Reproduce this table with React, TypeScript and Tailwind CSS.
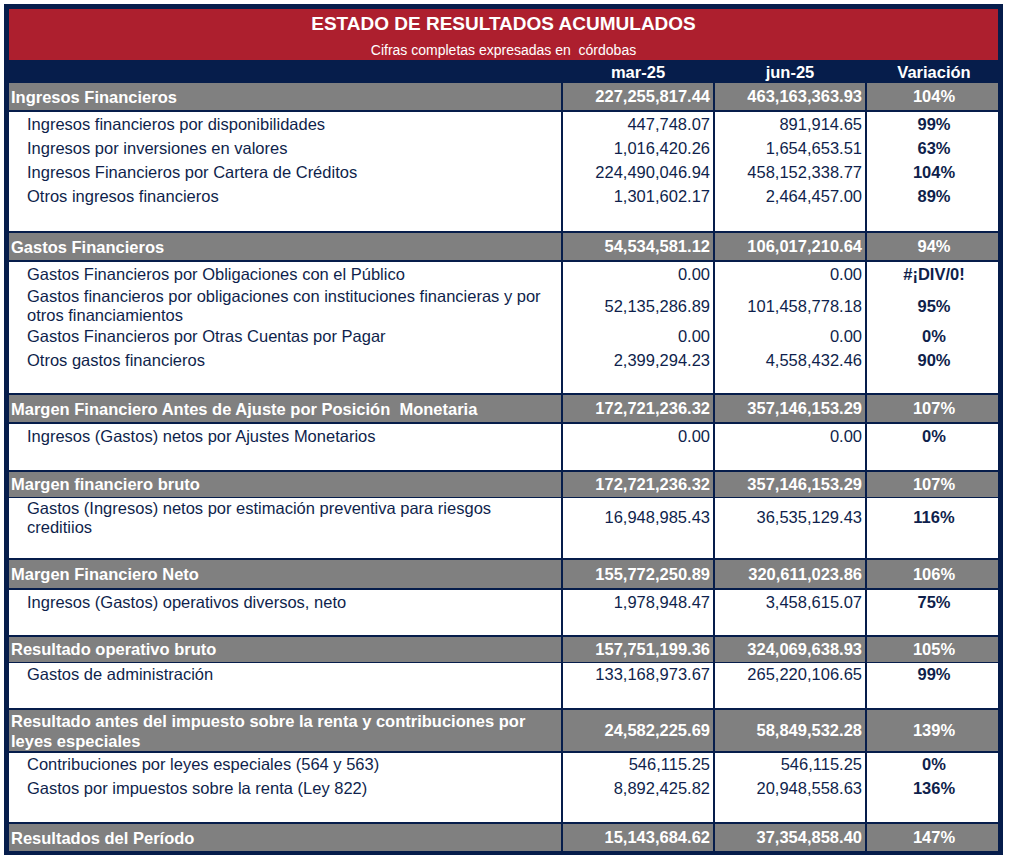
import React from "react";

type Row = { label: string[]; a: string; b: string; v: string; h: string };
type Section = {
  head: { label: string[]; a: string; b: string; v: string; h: string };
  rows: Row[];
  bodyH: string;
};

const sections: Section[] = [
  {
    head: { label: ["Ingresos Financieros"], a: "227,255,817.44", b: "463,163,363.93", v: "104%", h: "h-[27px]" },
    bodyH: "h-[119px]",
    rows: [
      { label: ["Ingresos financieros por disponibilidades"], a: "447,748.07", b: "891,914.65", v: "99%", h: "h-[24px]" },
      { label: ["Ingresos por inversiones en valores"], a: "1,016,420.26", b: "1,654,653.51", v: "63%", h: "h-[24px]" },
      { label: ["Ingresos Financieros por Cartera de Créditos"], a: "224,490,046.94", b: "458,152,338.77", v: "104%", h: "h-[24px]" },
      { label: ["Otros ingresos financieros"], a: "1,301,602.17", b: "2,464,457.00", v: "89%", h: "h-[24px]" },
    ],
  },
  {
    head: { label: ["Gastos Financieros"], a: "54,534,581.12", b: "106,017,210.64", v: "94%", h: "h-[27px]" },
    bodyH: "h-[131px]",
    rows: [
      { label: ["Gastos Financieros por Obligaciones con el Público"], a: "0.00", b: "0.00", v: "#¡DIV/0!", h: "h-[25px]" },
      {
        label: ["Gastos financieros por obligaciones con instituciones financieras y por", "otros financiamientos"],
        a: "52,135,286.89",
        b: "101,458,778.18",
        v: "95%",
        h: "h-[38px]",
      },
      { label: ["Gastos Financieros por Otras Cuentas por Pagar"], a: "0.00", b: "0.00", v: "0%", h: "h-[23px]" },
      { label: ["Otros gastos financieros"], a: "2,399,294.23", b: "4,558,432.46", v: "90%", h: "h-[24px]" },
    ],
  },
  {
    head: {
      label: ["Margen Financiero Antes de Ajuste por Posición  Monetaria"],
      a: "172,721,236.32",
      b: "357,146,153.29",
      v: "107%",
      h: "h-[27px]",
    },
    bodyH: "h-[46px]",
    rows: [
      { label: ["Ingresos (Gastos) netos por Ajustes Monetarios"], a: "0.00", b: "0.00", v: "0%", h: "h-[24px]" },
    ],
  },
  {
    head: { label: ["Margen financiero bruto"], a: "172,721,236.32", b: "357,146,153.29", v: "107%", h: "h-[24px]" },
    bodyH: "h-[60px]",
    rows: [
      {
        label: ["Gastos (Ingresos) netos por estimación preventiva para riesgos", "creditiios"],
        a: "16,948,985.43",
        b: "36,535,129.43",
        v: "116%",
        h: "h-[39px]",
      },
    ],
  },
  {
    head: { label: ["Margen Financiero Neto"], a: "155,772,250.89", b: "320,611,023.86", v: "106%", h: "h-[28px]" },
    bodyH: "h-[45px]",
    rows: [
      { label: ["Ingresos (Gastos) operativos diversos, neto"], a: "1,978,948.47", b: "3,458,615.07", v: "75%", h: "h-[24px]" },
    ],
  },
  {
    head: { label: ["Resultado operativo bruto"], a: "157,751,199.36", b: "324,069,638.93", v: "105%", h: "h-[24px]" },
    bodyH: "h-[45px]",
    rows: [
      { label: ["Gastos de administración"], a: "133,168,973.67", b: "265,220,106.65", v: "99%", h: "h-[23px]" },
    ],
  },
  {
    head: {
      label: ["Resultado antes del impuesto sobre la renta y contribuciones por", "leyes especiales"],
      a: "24,582,225.69",
      b: "58,849,532.28",
      v: "139%",
      h: "h-[41px]",
    },
    bodyH: "h-[69px]",
    rows: [
      { label: ["Contribuciones por leyes especiales (564 y 563)"], a: "546,115.25", b: "546,115.25", v: "0%", h: "h-[23px]" },
      { label: ["Gastos por impuestos sobre la renta (Ley 822)"], a: "8,892,425.82", b: "20,948,558.63", v: "136%", h: "h-[24px]" },
    ],
  },
];

const finalRow = { label: ["Resultados del Período"], a: "15,143,684.62", b: "37,354,858.40", v: "147%", h: "h-[27px]" };

const GRID = "grid grid-cols-[552px_150px_150px_131px] gap-x-[2px]";

function HeadRow({ r }: { r: Section["head"] }) {
  return (
    <div className={`${GRID} ${r.h}`}>
      <div className="bg-[#808080] flex flex-col justify-center pl-[2px] text-white font-bold leading-[20px] whitespace-pre">
        {r.label.map((l, i) => (
          <span key={i}>{l}</span>
        ))}
      </div>
      <div className="bg-[#808080] flex items-center justify-end pr-[3px] text-white font-bold">{r.a}</div>
      <div className="bg-[#808080] flex items-center justify-end pr-[3px] text-white font-bold">{r.b}</div>
      <div className="bg-[#808080] flex items-center justify-center pl-[3px] text-white font-bold">{r.v}</div>
    </div>
  );
}

function Body({ s }: { s: Section }) {
  return (
    <div className={`${GRID} ${s.bodyH}`}>
      <div className="bg-white flex flex-col pl-[18px] text-[#0f1f4c]">
        {s.rows.map((r, i) => (
          <div key={i} className={`${r.h} flex flex-col justify-center leading-[19px]`}>
            {r.label.map((l, j) => (
              <span key={j}>{l}</span>
            ))}
          </div>
        ))}
      </div>
      <div className="bg-white flex flex-col pr-[3px] text-[#0f1f4c]">
        {s.rows.map((r, i) => (
          <div key={i} className={`${r.h} flex items-center justify-end`}>
            {r.a}
          </div>
        ))}
      </div>
      <div className="bg-white flex flex-col pr-[3px] text-[#0f1f4c]">
        {s.rows.map((r, i) => (
          <div key={i} className={`${r.h} flex items-center justify-end`}>
            {r.b}
          </div>
        ))}
      </div>
      <div className="bg-white flex flex-col pl-[3px] text-[#0f1f4c] font-bold">
        {s.rows.map((r, i) => (
          <div key={i} className={`${r.h} flex items-center justify-center`}>
            {r.v}
          </div>
        ))}
      </div>
    </div>
  );
}

export default function App() {
  return (
    <div className="w-[1009px] h-[862px] bg-white pt-[4px] pl-[4px] font-['Liberation_Sans',Arial,sans-serif] text-[16.5px]">
      <div className="w-[999px] border-t-[5px] border-l-[5px] border-r-[5px] border-b-[4px] border-[#061d4b] bg-[#061d4b] flex flex-col">
        <div className="h-[51px] bg-[#ad1f2e] flex flex-col items-center pt-[4px] text-white">
          <div className="h-[22px] leading-[22px] text-[19px] font-bold">ESTADO DE RESULTADOS ACUMULADOS</div>
          <div className="mt-[7px] h-[16px] leading-[16px] text-[14px] whitespace-pre">Cifras completas expresadas en  córdobas</div>
        </div>
        <div className={`${GRID} h-[23px] text-white font-bold`}>
          <div />
          <div className="flex items-center justify-center">mar-25</div>
          <div className="flex items-center justify-center">jun-25</div>
          <div className="flex items-center justify-center pl-[3px]">Variación</div>
        </div>
        <div className="flex flex-col gap-y-[2px]">
          {sections.map((s, i) => (
            <React.Fragment key={i}>
              <HeadRow r={s.head} />
              <Body s={s} />
            </React.Fragment>
          ))}
          <HeadRow r={finalRow} />
        </div>
      </div>
    </div>
  );
}
